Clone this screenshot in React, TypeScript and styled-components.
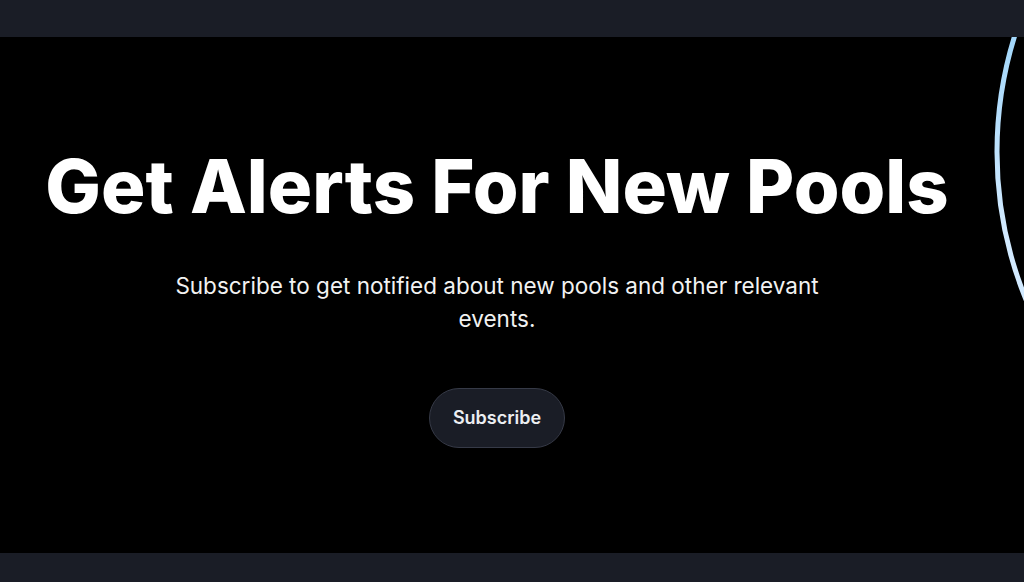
import styled, { createGlobalStyle } from 'styled-components';

const GlobalStyle = createGlobalStyle`
	* {
		box-sizing: border-box;
	}
	html, body {
		margin: 0;
		padding: 0;
		background: #000;
		font-family: Inter, 'Noto Sans', sans-serif;
	}
`;

const Page = styled.div`
	display: flex;
	flex-direction: column;
	height: 582px;
	background: #000;
`;

const Bar = styled.div<{ $height: number }>`
	height: ${props => props.$height}px;
	flex-shrink: 0;
	background: #1a1d26;
`;

const Hero = styled.section`
	position: relative;
	flex: 1;
	overflow: hidden;
	display: flex;
	flex-direction: column;
	align-items: center;
	justify-content: center;
	padding: 4px 30px 0 0;
	background: #000;
`;

const Title = styled.h1`
	margin: 0;
	font-size: 74px;
	font-weight: 800;
	color: #fff;
	line-height: 1.1;
	white-space: nowrap;
`;

const Subtitle = styled.p`
	margin: 41px 0 0;
	max-width: 680px;
	font-size: 22.5px;
	line-height: 33px;
	font-weight: 400;
	color: #f2f2f2;
	text-align: center;
`;

const Button = styled.button`
	margin-top: 53px;
	height: 60px;
	padding: 0 23px;
	border-radius: 30px;
	border: 1px solid #363a47;
	background: #1a1d26;
	color: #eceef1;
	font-family: Inter, sans-serif;
	font-size: 18px;
	font-weight: 600;
	cursor: pointer;
`;

const Ring = styled.svg`
	position: absolute;
	top: -278px;
	left: 994px;
	pointer-events: none;
`;

function App() {
	return (
		<Page>
			<GlobalStyle />
			<Bar $height={37} />
			<Hero>
				<Ring width="800" height="800" viewBox="0 0 800 800">
					<defs>
						<linearGradient id="ring" x1="0" y1="0" x2="0" y2="1">
							<stop offset="0.3" stopColor="#98d3fa" />
							<stop offset="0.6" stopColor="#d2eaff" />
						</linearGradient>
					</defs>
					<circle cx="393" cy="393" r="390" fill="none" stroke="url(#ring)" strokeWidth="5" />
				</Ring>
				<Title>Get Alerts For New Pools</Title>
				<Subtitle>Subscribe to get notified about new pools and other relevant events.</Subtitle>
				<Button>Subscribe</Button>
			</Hero>
			<Bar $height={29} />
		</Page>
	);
}

export default App;
